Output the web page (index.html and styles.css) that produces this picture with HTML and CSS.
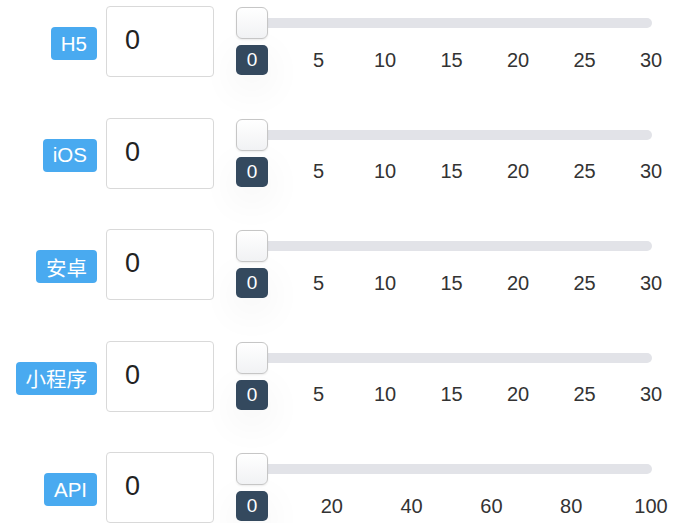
FILE: index.html
```html
<!DOCTYPE html>
<html lang="zh">
<head>
<meta charset="utf-8">
<link rel="stylesheet" href="styles.css">
</head>
<body>
<div class="list">
  <div class="row">
    <div class="label-col"><span class="badge">H5</span></div>
    <input class="num" type="text" value="0">
    <div class="slider">
      <div class="track-wrap"><div class="rail"></div><div class="thumb"></div></div>
      <div class="scale">
        <span class="tick tag">0</span><span class="tick">5</span><span class="tick">10</span><span class="tick">15</span><span class="tick">20</span><span class="tick">25</span><span class="tick">30</span>
      </div>
    </div>
  </div>
  <div class="row">
    <div class="label-col"><span class="badge">iOS</span></div>
    <input class="num" type="text" value="0">
    <div class="slider">
      <div class="track-wrap"><div class="rail"></div><div class="thumb"></div></div>
      <div class="scale">
        <span class="tick tag">0</span><span class="tick">5</span><span class="tick">10</span><span class="tick">15</span><span class="tick">20</span><span class="tick">25</span><span class="tick">30</span>
      </div>
    </div>
  </div>
  <div class="row">
    <div class="label-col"><span class="badge">安卓</span></div>
    <input class="num" type="text" value="0">
    <div class="slider">
      <div class="track-wrap"><div class="rail"></div><div class="thumb"></div></div>
      <div class="scale">
        <span class="tick tag">0</span><span class="tick">5</span><span class="tick">10</span><span class="tick">15</span><span class="tick">20</span><span class="tick">25</span><span class="tick">30</span>
      </div>
    </div>
  </div>
  <div class="row">
    <div class="label-col"><span class="badge">小程序</span></div>
    <input class="num" type="text" value="0">
    <div class="slider">
      <div class="track-wrap"><div class="rail"></div><div class="thumb"></div></div>
      <div class="scale">
        <span class="tick tag">0</span><span class="tick">5</span><span class="tick">10</span><span class="tick">15</span><span class="tick">20</span><span class="tick">25</span><span class="tick">30</span>
      </div>
    </div>
  </div>
  <div class="row">
    <div class="label-col"><span class="badge">API</span></div>
    <input class="num" type="text" value="0">
    <div class="slider">
      <div class="track-wrap"><div class="rail"></div><div class="thumb"></div></div>
      <div class="scale">
        <span class="tick tag">0</span><span class="tick">20</span><span class="tick">40</span><span class="tick">60</span><span class="tick">80</span><span class="tick">100</span>
      </div>
    </div>
  </div>
</div>
</body>
</html>
```
FILE: styles.css
```css
* { box-sizing: border-box; }
html, body { margin: 0; background: #fff; }
body {
  font-family: "Liberation Sans", "Noto Sans CJK SC", sans-serif;
  color: #333;
  padding-top: 6px;
}
.list {
  display: flex;
  flex-direction: column;
  gap: 40.5px;
}
.row {
  display: flex;
  align-items: flex-start;
  height: 71px;
}
.label-col {
  width: 97px;
  height: 71px;
  display: flex;
  justify-content: flex-end;
  align-items: center;
  padding-top: 4px;
}
.badge {
  display: inline-flex;
  align-items: center;
  height: 33px;
  padding: 0 10px;
  background: #49aaf0;
  color: #fff;
  font-size: 20.5px;
  border-radius: 4px;
  white-space: nowrap;
}
.num {
  margin: 0 0 0 9px;
  width: 108px;
  height: 71px;
  border: 1px solid #d9d9d9;
  border-radius: 4px;
  padding: 0 0 2px 18px;
  font-family: "Liberation Sans", sans-serif;
  font-size: 27px;
  color: #222;
  outline: none;
  background: #fff;
}
.slider {
  margin-left: 22px;
  width: 416px;
  padding-top: 1px;
}
.track-wrap {
  position: relative;
  height: 32px;
  padding-top: 11px;
}
.rail {
  height: 10px;
  border-radius: 5px;
  background: #e2e3e8;
}
.thumb {
  position: absolute;
  left: 0;
  top: 0;
  width: 32px;
  height: 32px;
  border: 1px solid #c6c6c6;
  border-radius: 6px;
  background: linear-gradient(#ffffff, #f1f2f4);
  box-shadow: 0 1px 2px rgba(0,0,0,0.08);
}
.scale {
  margin-top: 6px;
  width: 431px;
  display: flex;
  justify-content: space-between;
}
.tick {
  width: 32px;
  height: 30px;
  display: flex;
  justify-content: center;
  align-items: center;
  font-size: 20px;
  color: #333;
  white-space: nowrap;
}
.tag {
  background: #34495e;
  color: #fff;
  border-radius: 5px;
  font-size: 19px;
  box-shadow: 0 12px 40px rgba(0,0,0,0.07);
}
```
